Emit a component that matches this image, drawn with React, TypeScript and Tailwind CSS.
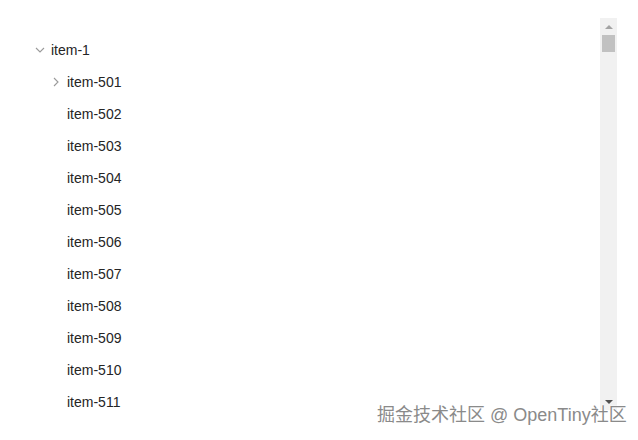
import React from "react";

const children = Array.from({ length: 11 }, (_, i) => `item-${501 + i}`);

function Down() {
  return (
    <svg width="10" height="6" viewBox="0 0 10 6" className="block">
      <path d="M1 1 L5 5 L9 1" fill="none" stroke="#9a9a9a" strokeWidth="1.1" />
    </svg>
  );
}

function Right() {
  return (
    <svg width="6" height="10" viewBox="0 0 6 10" className="block">
      <path d="M1 1 L5 5 L1 9" fill="none" stroke="#9a9a9a" strokeWidth="1.1" />
    </svg>
  );
}

export default function App() {
  return (
    <div
      className="relative w-[638px] h-[440px] bg-white overflow-hidden"
      style={{ fontFamily: '"Liberation Sans", Arial, "Noto Sans CJK SC", sans-serif' }}
    >
      <div className="flex pt-[18px] pl-[32px]">
        <div className="w-[568px] h-[392px] overflow-hidden pt-[16px]">
          <div className="flex items-center h-[32px]">
            <div className="w-[16px] flex justify-center">
              <Down />
            </div>
            <span className="ml-[3px] text-[14px] text-[#252525]">item-1</span>
          </div>
          {children.map((c, i) => (
            <div key={c} className="flex items-center h-[32px] pl-[16px]">
              <div className="w-[16px] flex justify-center">{i === 0 ? <Right /> : null}</div>
              <span className="ml-[3px] text-[14px] text-[#252525]">{c}</span>
            </div>
          ))}
        </div>
        <div className="w-[17px] h-[392px] bg-[#f1f1f1] flex flex-col items-center">
          <div className="h-[17px] w-full flex items-center justify-center">
            <div className="w-0 h-0 border-l-[4px] border-r-[4px] border-b-[4px] border-l-transparent border-r-transparent border-b-[#a3a3a3]" />
          </div>
          <div className="w-[13px] h-[17px] bg-[#c1c1c1]" />
          <div className="flex-1" />
          <div className="h-[17px] w-full flex items-center justify-center">
            <div className="w-0 h-0 border-l-[4px] border-r-[4px] border-t-[4px] border-l-transparent border-r-transparent border-t-[#505050]" />
          </div>
        </div>
      </div>
      <div
        className="absolute left-[377px] top-[403px] text-[18px] leading-[24px] text-[#8a8a8a] whitespace-nowrap"
        style={{ textShadow: "0 0 1px #fff, 0 0 2px #fff, 0 0 2px #fff" }}
      >
        掘金技术社区 @ OpenTiny社区
      </div>
    </div>
  );
}
